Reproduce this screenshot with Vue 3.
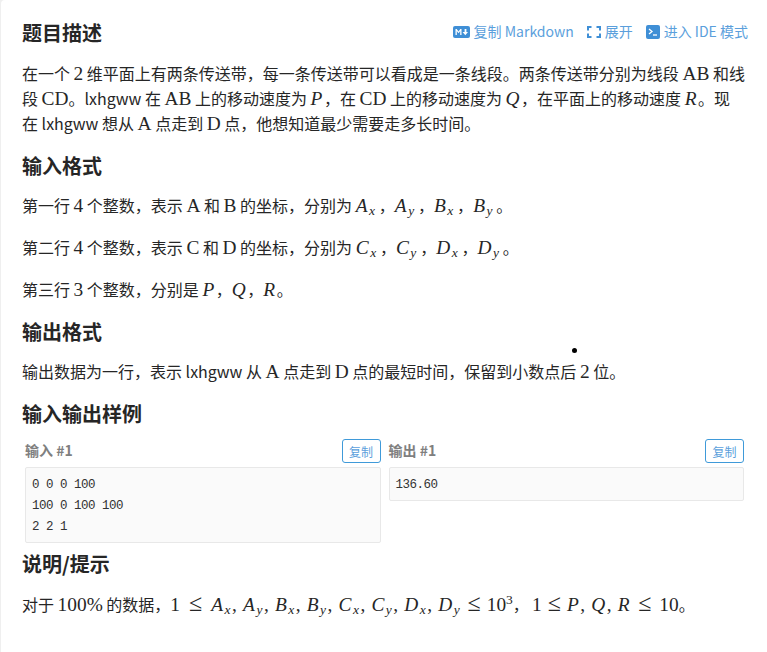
<script setup>
const copy = '复制'
</script>

<template>
  <div class="card">
    <div class="head">
      <h2>题目描述</h2>
      <div class="actions">
        <a>
          <svg class="ic" width="17" height="12" viewBox="0 0 17 12"><rect width="17" height="12" rx="2" fill="#3f8fd6"/><path d="M2.500 9V3h1.200L5.500 5.400 7.300 3h1.200v6H7.200V5L5.500 7.200 3.800 5v4z" fill="#fff"/><path d="M11.600 3h1.800v3H15l-2.700 3.200L9.600 6h2z" fill="#fff"/></svg>
          <span>复制 Markdown</span>
        </a>
        <a>
          <svg class="ic" width="14" height="12" viewBox="0 0 14 12"><path d="M1 4.500V1h3.500M9.500 1H13v3.500M13 7.500V11H9.500M4.500 11H1V7.500" fill="none" stroke="#3f8fd6" stroke-width="2"/></svg>
          <span>展开</span>
        </a>
        <a>
          <svg class="ic" width="14" height="14" viewBox="0 0 14 14"><rect width="14" height="14" rx="2" fill="#3f8fd6"/><path d="M3 4l3 2.500L3 9" fill="none" stroke="#fff" stroke-width="1.300"/><path d="M7 10h4" stroke="#fff" stroke-width="1.300"/></svg>
          <span>进入 IDE 模式</span>
        </a>
      </div>
    </div>
    <p class="intro">在一个 <span class="m">2</span> 维平面上有两条传送带，每一条传送带可以看成是一条线段。两条传送带分别为线段 <span class="m">AB</span> 和线段 <span class="m">CD</span>。lxhgww 在 <span class="m">AB</span> 上的移动速度为 <i class="m">P</i>，在 <span class="m">CD</span> 上的移动速度为 <i class="m">Q</i>，在平面上的移动速度 <i class="m">R</i>。现在 lxhgww 想从 <span class="m">A</span> 点走到 <span class="m">D</span> 点，他想知道最少需要走多长时间。</p>

    <h2 class="sec">输入格式</h2>
    <p>第一行 <span class="m">4</span> 个整数，表示 <span class="m">A</span> 和 <span class="m">B</span> 的坐标，分别为 <i class="m">A<sub>x</sub></i>，<i class="m">A<sub>y</sub></i>，<i class="m">B<sub>x</sub></i>，<i class="m">B<sub>y</sub></i>。</p>
    <p>第二行 <span class="m">4</span> 个整数，表示 <span class="m">C</span> 和 <span class="m">D</span> 的坐标，分别为 <i class="m">C<sub>x</sub></i>，<i class="m">C<sub>y</sub></i>，<i class="m">D<sub>x</sub></i>，<i class="m">D<sub>y</sub></i>。</p>
    <p>第三行 <span class="m">3</span> 个整数，分别是 <i class="m">P</i>，<i class="m">Q</i>，<i class="m">R</i>。</p>

    <h2 class="sec">输出格式</h2>
    <p>输出数据为一行，表示 lxhgww 从 <span class="m">A</span> 点走到 <span class="m">D</span> 点的最短时间，保留到小数点后 <span class="m">2</span> 位。</p>

    <h2 class="sec">输入输出样例</h2>
    <div class="samples">
      <div class="sample">
        <div class="sample-head"><h3>输入 #1</h3><button>{{ copy }}</button></div>
        <pre>0 0 0 100
100 0 100 100
2 2 1</pre>
      </div>
      <div class="sample">
        <div class="sample-head"><h3>输出 #1</h3><button>{{ copy }}</button></div>
        <pre>136.60</pre>
      </div>
    </div>

    <h2 class="sec hint">说明/提示</h2>
    <p>对于 <span class="m">100%</span> 的数据，<span class="m expr">1 <span class="rel">≤</span> <i>A<sub>x</sub></i>, <i>A<sub>y</sub></i>, <i>B<sub>x</sub></i>, <i>B<sub>y</sub></i>, <i>C<sub>x</sub></i>, <i>C<sub>y</sub></i>, <i>D<sub>x</sub></i>, <i>D<sub>y</sub></i> <span class="rel tight">≤</span> 10<sup>3</sup></span>，<span class="m expr second">1 <span class="rel tight">≤</span> <i>P</i>, <i>Q</i>, <i>R</i> <span class="rel last">≤</span> 10</span>。</p>
    <span class="cursor"></span>
  </div>
</template>

<style scoped>
.card {
  position: relative;
  box-sizing: border-box;
  height: 652px;
  margin-left: 1px;
  padding: 21px 21px 0;
  background: #fff;
  border-radius: 4px 0 0 0;
  color: #262626;
  font: 16px/25px "Noto Sans CJK SC", "Liberation Sans", sans-serif;
  overflow: hidden;
}
.head { display: flex; justify-content: space-between; align-items: center; height: 24px; }
h2 { margin: 0; font-size: 20px; line-height: 26px; font-weight: 700; color: #262626; }
.actions { display: flex; gap: 13px; margin: -3px -2px 0 0; font-size: 14px; color: #5b9fdc; }
.actions a { display: flex; align-items: center; gap: 4px; }
.ic { flex: none; }
p { margin: 14px 0 17px; font-size: 16px; line-height: 25px; }
.intro { margin-top: 16px; }
.sec { margin: 16px 0 14px; }
.m { font-family: "Liberation Serif", "Noto Sans CJK SC", serif; font-size: 19.36px; line-height: 0; }
i.m, .m i { font-style: italic; letter-spacing: 1.5px; }
i.m sub { margin-right: 2.3px; }
.expr { word-spacing: 1.3px; }
.second { margin-left: 3px; }
.rel { margin: 0 2.9px; font-size: 24px; }
.rel.tight { margin: 0; }
.rel.last { margin: 0 1.9px 0 0.9px; }
sub, sup { font-size: 13.5px; line-height: 0; }
sub { vertical-align: -3px; }
.samples { display: flex; gap: 8px; margin: -4px 2px 0 3px; }
.sample { flex: 1 1 0; min-width: 0; }
.sample-head { display: flex; justify-content: space-between; align-items: center; height: 28px; margin-bottom: 2px; }
h3 { margin: -2px 0 0; font-size: 14px; line-height: 20px; font-weight: 700; color: #7f7f7f; }
button {
  box-sizing: border-box;
  width: 39px;
  height: 24px;
  padding: 0;
  background: #fff;
  border: 1px solid #3f9ad9;
  border-radius: 3px;
  color: #5b9fdc;
  font: 12px "Noto Sans CJK SC", sans-serif;
}
pre {
  margin: 0;
  padding: 7px 6px 4px;
  background: #fafafa;
  border: 1px solid #e8e8e8;
  border-radius: 2px;
  color: #333;
  font: 12.500px/21px "Liberation Mono", monospace;
  letter-spacing: -0.5px;
}
.hint { margin-top: 8px; margin-bottom: 15px; }
.cursor {
  position: absolute;
  left: 571px;
  top: 348px;
  width: 5px;
  height: 5px;
  border-radius: 50%;
  background: #000;
}
</style>

<style>
html, body { background: #efefef; margin: 0; }
</style>
